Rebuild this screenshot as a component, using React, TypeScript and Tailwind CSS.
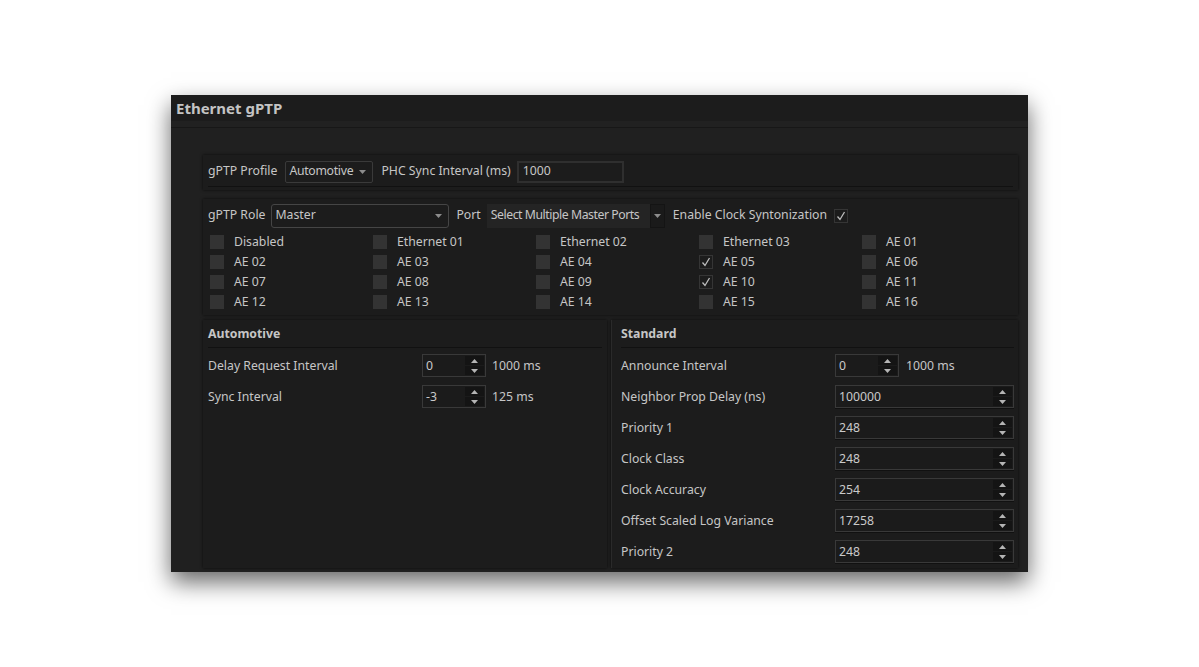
import clsx from "clsx";

const FONT = "font-['Noto_Sans','Open_Sans',sans-serif]";

function Tri({ up, dim }: { up?: boolean; dim?: boolean }) {
  const fill = dim ? "#8c8c8c" : "#b5b5b5";
  return (
    <svg width="7" height="4" viewBox="0 0 7 4">
      {up ? <polygon points="0,4 7,4 3.5,0" fill={fill} /> : <polygon points="0,0 7,0 3.5,4" fill={fill} />}
    </svg>
  );
}

function Check() {
  return (
    <svg width="10" height="10" viewBox="0 0 10 10">
      <polyline points="1.5,5.5 4,8.5 8.5,1" fill="none" stroke="#bdbdbd" strokeWidth="1.3" />
    </svg>
  );
}

function SpinBox({ value, wide }: { value: string; wide?: boolean }) {
  return (
    <div
      className={clsx(
        "flex h-[23px] items-stretch border border-[#393939] bg-[#1b1b1b]",
        wide ? "w-[179px] border-[#2c2c2c] shadow-[0_1px_0_#111]" : "w-[64px]"
      )}
    >
      <span className="flex-1 pl-[3px] leading-[21px] text-[#cacaca]">{value}</span>
      <div className="flex w-[20px] flex-col gap-px py-px pr-px">
        <div className="flex flex-1 items-center justify-center bg-[#141414]">
          <Tri up />
        </div>
        <div className="flex flex-1 items-center justify-center bg-[#141414]">
          <Tri />
        </div>
      </div>
    </div>
  );
}

function Box({ checked }: { checked?: boolean }) {
  return checked ? (
    <span className="flex h-[14px] w-[14px] items-center justify-center border border-[#353535] bg-[#1c1c1c]">
      <Check />
    </span>
  ) : (
    <span className="h-[14px] w-[14px] bg-[#333333]" />
  );
}

const ports = [
  "Disabled", "Ethernet 01", "Ethernet 02", "Ethernet 03", "AE 01",
  "AE 02", "AE 03", "AE 04", "AE 05", "AE 06",
  "AE 07", "AE 08", "AE 09", "AE 10", "AE 11",
  "AE 12", "AE 13", "AE 14", "AE 15", "AE 16",
];
const checkedPorts = ["AE 05", "AE 10"];

const standardRows: [string, string, boolean][] = [
  ["Announce Interval", "0", false],
  ["Neighbor Prop Delay (ns)", "100000", true],
  ["Priority 1", "248", true],
  ["Clock Class", "248", true],
  ["Clock Accuracy", "254", true],
  ["Offset Scaled Log Variance", "17258", true],
  ["Priority 2", "248", true],
];

export default function App() {
  return (
    <div
      className={clsx(
        "min-h-[667px] w-[1199px] whitespace-nowrap bg-white pl-[171px] pt-[95px] text-[12.25px] text-[#c6c6c6]",
        FONT
      )}
    >
      <div className="flex h-[477px] w-[857px] flex-col bg-[#202020] shadow-[0_10px_22px_rgba(0,0,0,0.6)]">
        {/* title */}
        <div className="flex h-[26px] items-center bg-[#1c1c1c] pl-[5px] text-[15px] font-bold text-[#c4c4c4]">
          Ethernet gPTP
        </div>
        <div className="h-[7px] border-b border-[#171717] bg-[#212121]" />

        <div className="flex flex-1 flex-col pb-[4px] pl-[32px] pr-[10px] pt-[27px]">
          {/* profile */}
          <div className="h-[35px] bg-[#1c1c1c] pt-[5px] shadow-[0_0_3px_rgba(0,0,0,0.7)]">
            <div className="flex h-[22px] items-center pl-[5px] pt-px">
              <span>gPTP Profile</span>
              <div className="ml-[8px] flex h-[22px] w-[88px] items-center justify-between rounded-[2px] border border-[#3a3a3a] bg-[#1c1c1c] pl-[3px] pr-[6px]">
                <span className="tracking-[-0.3px]">Automotive</span>
                <Tri dim />
              </div>
              <span className="ml-[8px]">PHC Sync Interval (ms)</span>
              <div className="ml-[6px] flex h-[22px] w-[107px] items-center border-2 border-[#2f2f2f] bg-[#1c1c1c] pl-[4px]">
                1000
              </div>
            </div>
            <div className="mx-[5px] mt-[4px] h-px bg-[#111111]" />
          </div>

          {/* role + ports */}
          <div className="mt-[9px] h-[116px] bg-[#1c1c1c] pt-[4px] shadow-[0_0_3px_rgba(0,0,0,0.7)]">
            <div className="flex h-[24px] items-center pl-[5px] pt-px">
              <span>gPTP Role</span>
              <div className="ml-[6px] flex h-[24px] w-[178px] items-center justify-between rounded-[3px] border border-[#454545] bg-[#1c1c1c] pl-[3px] pr-[6px]">
                <span>Master</span>
                <Tri dim />
              </div>
              <span className="ml-[7px]">Port</span>
              <div className="ml-[6px] flex h-[24px] w-[178px] items-stretch bg-[#242424]">
                <span className="flex flex-1 items-center pl-[4px] tracking-[-0.45px]">Select Multiple Master Ports</span>
                <span className="flex w-[15px] items-center justify-center border border-[#141414] bg-[#1a1a1a]">
                  <Tri dim />
                </span>
              </div>
              <span className="ml-[8px]">Enable Clock Syntonization</span>
              <span className="ml-[7px]">
                <Box checked />
              </span>
            </div>
            <div className="mt-[5px] grid grid-cols-[163px_163px_163px_163px_163px] pl-[7px]">
              {ports.map((p) => (
                <div key={p} className="flex h-[20px] items-center gap-[10px]">
                  <Box checked={checkedPorts.includes(p)} />
                  <span className="pt-px">{p}</span>
                </div>
              ))}
            </div>
          </div>

          {/* settings */}
          <div className="mt-[5px] flex flex-1 gap-[4px]">
            <div className="w-[404px] bg-[#1c1c1c] shadow-[0_0_3px_rgba(0,0,0,0.7)]">
              <div className="flex h-[27px] items-center pl-[5px] pt-px font-bold">Automotive</div>
              <div className="mx-[5px] h-px bg-[#111111]" />
              <div className="mt-[6px] flex flex-col gap-[8px] pl-[5px]">
                <div className="flex h-[23px] items-center">
                  <span className="w-[214px] pt-px">Delay Request Interval</span>
                  <SpinBox value="0" />
                  <span className="ml-[6px] pt-px">1000 ms</span>
                </div>
                <div className="flex h-[23px] items-center">
                  <span className="w-[214px] pt-px">Sync Interval</span>
                  <SpinBox value="-3" />
                  <span className="ml-[6px] pt-px">125 ms</span>
                </div>
              </div>
            </div>

            <div className="flex-1 border-l border-[#2a2a2a] bg-[#1c1c1c] shadow-[0_0_3px_rgba(0,0,0,0.7)]">
              <div className="flex h-[27px] items-center pl-[9px] pt-px font-bold">Standard</div>
              <div className="ml-[9px] mr-[4px] h-px bg-[#111111]" />
              <div className="mt-[6px] flex flex-col gap-[8px] pl-[9px]">
                {standardRows.map(([label, value, wide]) => (
                  <div key={label} className="flex h-[23px] items-center">
                    <span className="w-[214px] pt-px">{label}</span>
                    <SpinBox value={value} wide={wide} />
                    {!wide && <span className="ml-[7px] pt-px">1000 ms</span>}
                  </div>
                ))}
              </div>
            </div>
          </div>
        </div>
      </div>
    </div>
  );
}
